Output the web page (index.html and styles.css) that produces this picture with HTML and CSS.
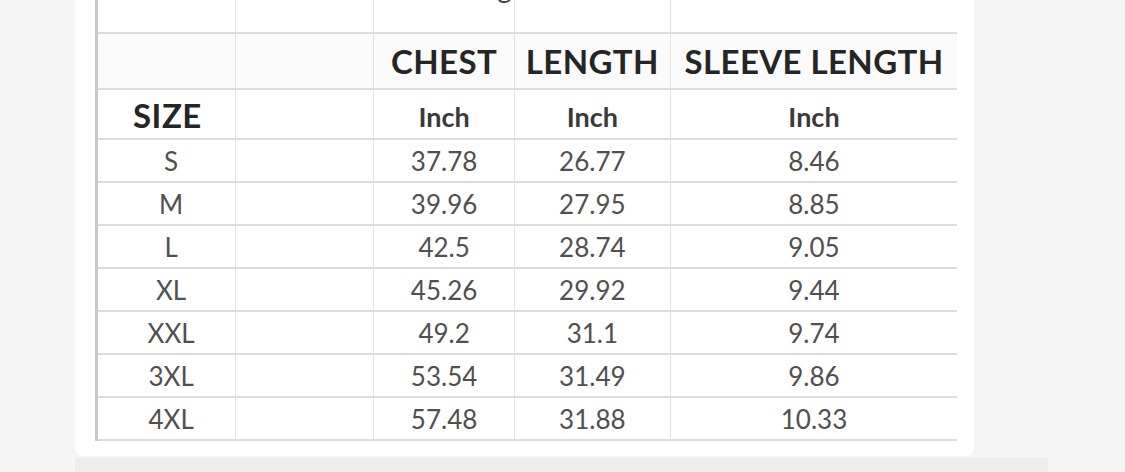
FILE: index.html
```html
<!DOCTYPE html>
<html lang="en">
<head>
<meta charset="utf-8">
<title>Size Chart</title>
<link rel="stylesheet" href="styles.css">
</head>
<body>
<div class="page">
  <div class="card">
    <table class="chart">
      <colgroup>
        <col class="c-size"><col class="c-blank"><col class="c-chest"><col class="c-length"><col class="c-sleeve">
      </colgroup>
      <tr class="title-row">
        <td></td><td></td><td class="title">Sizing</td><td></td><td></td>
      </tr>
      <tr class="head-row">
        <td></td><td></td><th>CHEST</th><th>LENGTH</th><th>SLEEVE LENGTH</th>
      </tr>
      <tr class="unit-row">
        <th class="size-label">SIZE</th><td></td><td class="unit">Inch</td><td class="unit">Inch</td><td class="unit">Inch</td>
      </tr>
      <tr><td class="sz">S</td><td></td><td>37.78</td><td>26.77</td><td>8.46</td></tr>
      <tr><td class="sz">M</td><td></td><td>39.96</td><td>27.95</td><td>8.85</td></tr>
      <tr><td class="sz">L</td><td></td><td>42.5</td><td>28.74</td><td>9.05</td></tr>
      <tr><td class="sz">XL</td><td></td><td>45.26</td><td>29.92</td><td>9.44</td></tr>
      <tr><td class="sz">XXL</td><td></td><td>49.2</td><td>31.1</td><td>9.74</td></tr>
      <tr><td class="sz">3XL</td><td></td><td>53.54</td><td>31.49</td><td>9.86</td></tr>
      <tr><td class="sz">4XL</td><td></td><td>57.48</td><td>31.88</td><td>10.33</td></tr>
    </table>
  </div>
  <div class="strip"></div>
</div>
</body>
</html>
```
FILE: styles.css
```css
html, body {
  margin: 0;
  padding: 0;
}
body {
  background: #f5f5f5;
  font-family: Lato, "Open Sans", sans-serif;
  overflow: hidden;
}
.page {
  padding-left: 75px;
}
.card {
  width: 899px;
  height: 484px;
  margin-top: -28px;
  background: #ffffff;
  border-radius: 0 0 8px 8px;
  box-sizing: border-box;
  padding-left: 20px;
  overflow: hidden;
}
.chart {
  border-collapse: collapse;
  table-layout: fixed;
  width: 862px;
  border-left: 3px solid #c9c9c9;
}
.c-size { width: 139px; }
.c-blank { width: 138px; }
.c-chest { width: 140px; }
.c-length { width: 156px; }
.c-sleeve { width: 286px; }
.chart td, .chart th {
  padding: 0;
  text-align: center;
  border-bottom: 2px solid #dcdcdc;
  border-right: 1px solid #e4e4e4;
  height: 41px;
  font-size: 26px;
  color: #505050;
  font-weight: 400;
  line-height: 1;
}
.chart td:last-child, .chart th:last-child {
  border-right: none;
}
.chart .sz {
  padding-left: 9px;
}
.title-row td {
  height: 60px;
}
.title-row .title {
  vertical-align: top;
  text-align: right;
  font-size: 28px;
  line-height: 28px;
  color: #444;
  padding-right: 2px;
  padding-top: 1px;
  height: 59px;
}
.head-row td, .head-row th {
  height: 54px;
  background: #fbfbfb;
}
.head-row th {
  font-size: 33px;
  font-weight: 700;
  letter-spacing: 0.4px;
  color: #252525;
}
.unit-row td, .unit-row th {
  height: 48px;
}
.unit-row .size-label {
  font-size: 33px;
  font-weight: 700;
  letter-spacing: 0.5px;
  color: #252525;
  text-align: left;
  padding-left: 35px;
  padding-top: 2px;
  height: 46px;
}
.unit-row .unit {
  font-weight: 700;
  color: #3a3a3a;
  font-size: 27px;
  padding-top: 4px;
  height: 44px;
}
.strip {
  width: 973px;
  height: 14px;
  margin-top: 2px;
  background: #ececec;
}
```
